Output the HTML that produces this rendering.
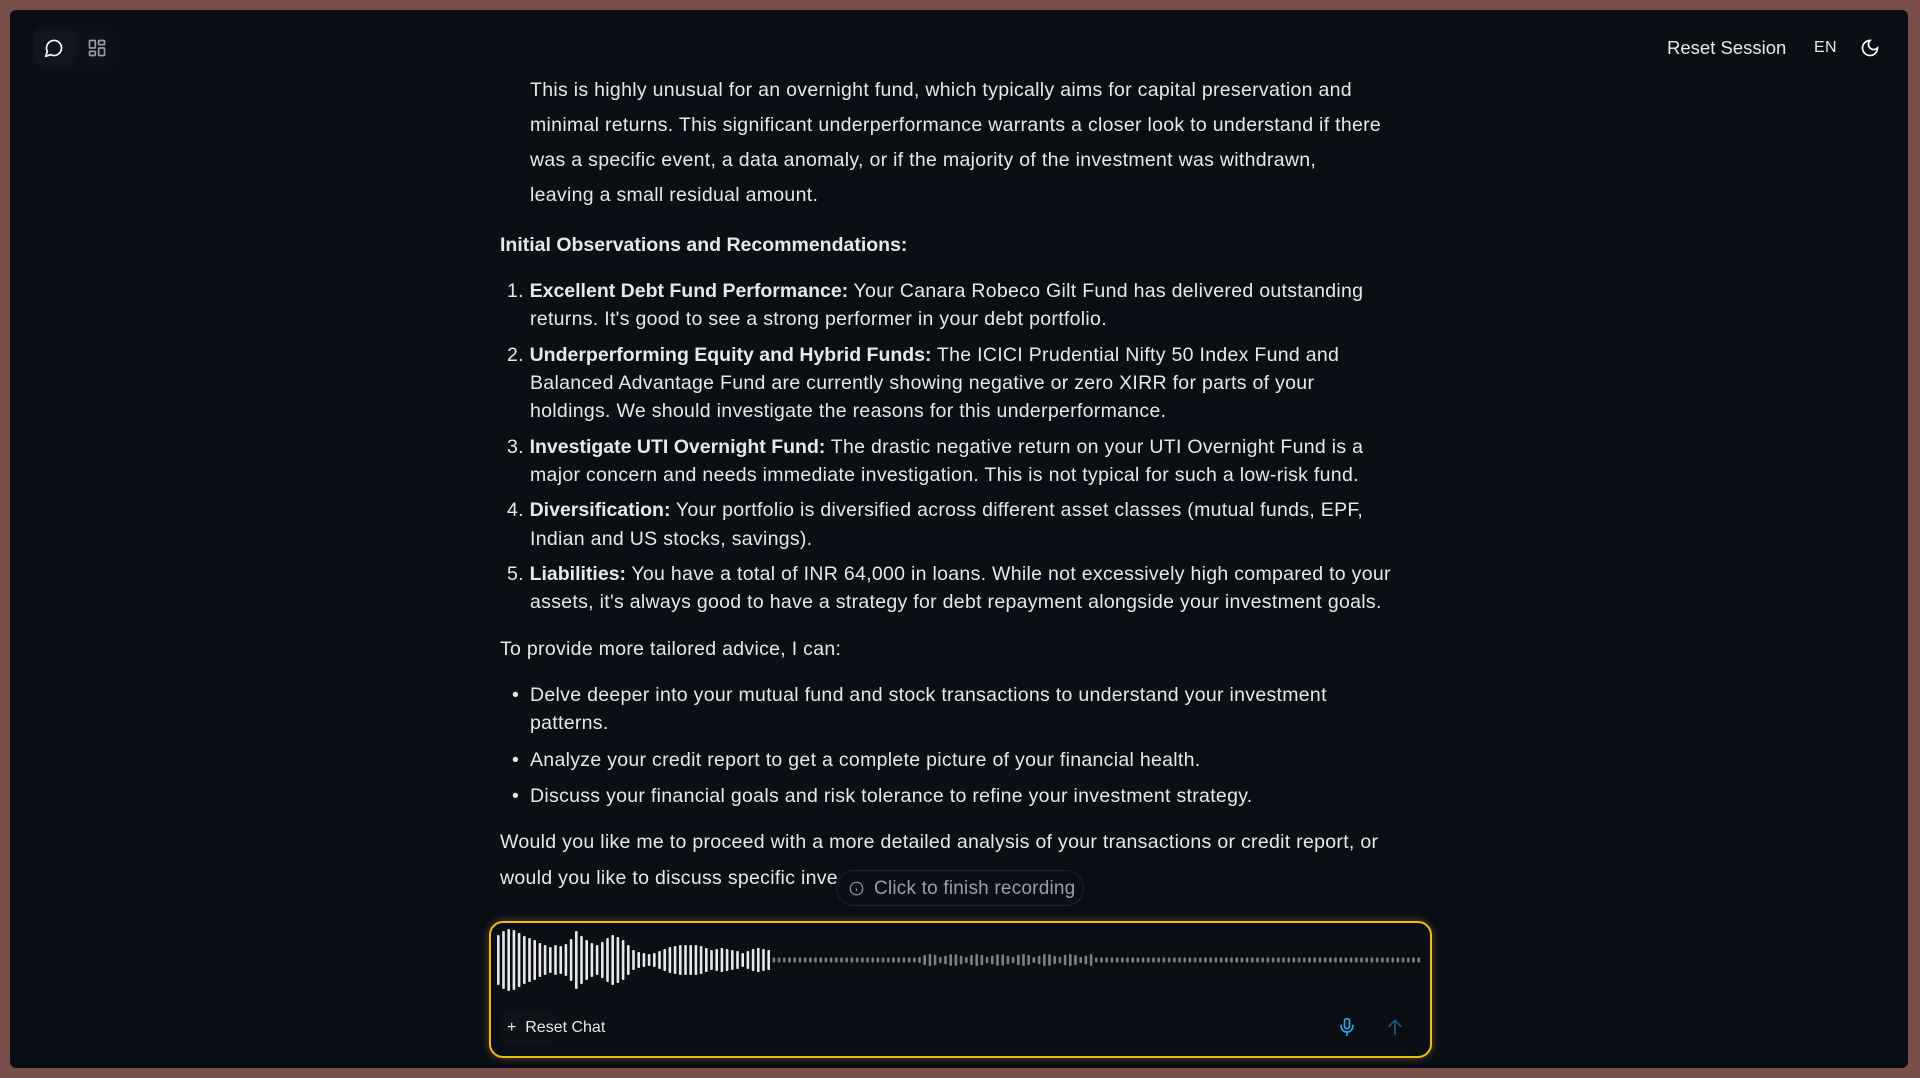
<!DOCTYPE html>
<html><head><meta charset="utf-8"><style>
*{margin:0;padding:0;box-sizing:border-box}
body{width:1920px;height:1078px;background:#7b4f49;overflow:hidden;font-family:"Liberation Sans",sans-serif;color:#e8e8ea;position:relative}
.frame{position:absolute;left:10px;top:10px;width:1898px;height:1058px;background:#0a0e15;border-radius:6px;overflow:hidden}
.abs{position:absolute}
.t{position:absolute;font-size:19.5px;white-space:nowrap;line-height:1;letter-spacing:0.3px}
b{font-weight:bold;letter-spacing:0}
</style></head><body>
<div class="frame"></div>
<div class="abs" style="left:32px;top:25px;width:88px;height:45px;background:#0c1118;border-radius:12px"></div>
<div class="abs" style="left:34px;top:29px;width:42px;height:37px;background:#10161d;border-radius:10px"></div>
<svg class="abs" style="left:44px;top:38px" width="20" height="20" viewBox="0 0 24 24" fill="none" stroke="#fff" stroke-width="2" stroke-linecap="round" stroke-linejoin="round"><path d="M7.9 20A9 9 0 1 0 4 16.1L2 22Z"/></svg>
<svg class="abs" style="left:87px;top:38px" width="20" height="20" viewBox="0 0 24 24" fill="none" stroke="#9aa0a8" stroke-width="2"><rect x="3" y="3" width="7" height="9" rx="1"/><rect x="14" y="3" width="7" height="5" rx="1"/><rect x="14" y="12" width="7" height="9" rx="1"/><rect x="3" y="16" width="7" height="5" rx="1"/></svg>
<div class="t" style="left:1667px;top:39px;font-size:18.5px;letter-spacing:0">Reset Session</div>
<div class="t" style="left:1814px;top:40px;font-size:16px">EN</div>
<svg class="abs" style="left:1860px;top:38px" width="20" height="20" viewBox="0 0 24 24" fill="none" stroke="#fff" stroke-width="2" stroke-linecap="round"><path d="M12 3a6 6 0 0 0 9 9 9 9 0 1 1-9-9Z"/></svg>

<div class="t" style="left:530px;top:81px">This is highly unusual for an overnight fund, which typically aims for capital preservation and</div>
<div class="t" style="left:530px;top:116px">minimal returns. This significant underperformance warrants a closer look to understand if there</div>
<div class="t" style="left:530px;top:151px">was a specific event, a data anomaly, or if the majority of the investment was withdrawn,</div>
<div class="t" style="left:530px;top:186px">leaving a small residual amount.</div>
<div class="t" style="left:500px;top:236px"><b>Initial Observations and Recommendations:</b></div>
<div class="t" style="left:507px;top:282px">1. <b>Excellent Debt Fund Performance:</b> Your Canara Robeco Gilt Fund has delivered outstanding</div>
<div class="t" style="left:530px;top:310px">returns. It's good to see a strong performer in your debt portfolio.</div>
<div class="t" style="left:507px;top:346px">2. <b>Underperforming Equity and Hybrid Funds:</b> The ICICI Prudential Nifty 50 Index Fund and</div>
<div class="t" style="left:530px;top:374px">Balanced Advantage Fund are currently showing negative or zero XIRR for parts of your</div>
<div class="t" style="left:530px;top:402px">holdings. We should investigate the reasons for this underperformance.</div>
<div class="t" style="left:507px;top:438px">3. <b>Investigate UTI Overnight Fund:</b> The drastic negative return on your UTI Overnight Fund is a</div>
<div class="t" style="left:530px;top:466px">major concern and needs immediate investigation. This is not typical for such a low-risk fund.</div>
<div class="t" style="left:507px;top:501px">4. <b>Diversification:</b> Your portfolio is diversified across different asset classes (mutual funds, EPF,</div>
<div class="t" style="left:530px;top:530px">Indian and US stocks, savings).</div>
<div class="t" style="left:507px;top:565px">5. <b>Liabilities:</b> You have a total of INR 64,000 in loans. While not excessively high compared to your</div>
<div class="t" style="left:530px;top:593px">assets, it's always good to have a strategy for debt repayment alongside your investment goals.</div>
<div class="t" style="left:500px;top:640px">To provide more tailored advice, I can:</div>
<div class="t" style="left:512px;top:686px">•</div><div class="t" style="left:530px;top:686px">Delve deeper into your mutual fund and stock transactions to understand your investment</div>
<div class="t" style="left:530px;top:714px">patterns.</div>
<div class="t" style="left:512px;top:751px">•</div><div class="t" style="left:530px;top:751px">Analyze your credit report to get a complete picture of your financial health.</div>
<div class="t" style="left:512px;top:787px">•</div><div class="t" style="left:530px;top:787px">Discuss your financial goals and risk tolerance to refine your investment strategy.</div>
<div class="t" style="left:500px;top:833px">Would you like me to proceed with a more detailed analysis of your transactions or credit report, or</div>
<div class="t" style="left:500px;top:869px">would you like to discuss specific inve</div>

<div class="abs" style="left:836px;top:870px;width:248px;height:36px;border:1px solid #1c232c;border-radius:18px;background:#0a0e15"></div>
<svg class="abs" style="left:849px;top:881px" width="15" height="15" viewBox="0 0 24 24" fill="none" stroke="#8a9098" stroke-width="2"><circle cx="12" cy="12" r="10"/><path d="M12 16v-4M12 8h.01"/></svg>
<div class="t" style="left:874px;top:879px;color:#9a9fa6;font-size:19px;letter-spacing:0.2px">Click to finish recording</div>

<div class="abs" style="left:489px;top:921px;width:943px;height:137px;border:2px solid #f2bb13;border-radius:14px;background:#0a0e15;box-shadow:0 0 8px rgba(242,187,19,.35)"></div>
<svg id="wv" class="abs" style="left:495px;top:925px" width="930" height="72"></svg>
<div class="abs" style="left:501px;top:1011px;width:58px;height:35px;background:#0d1219;border-radius:8px"></div>
<div class="t" style="left:507px;top:1020px;font-size:16px;letter-spacing:0">+&nbsp; Reset Chat</div>
<svg class="abs" style="left:1337px;top:1016px" width="20" height="22" viewBox="0 0 24 24" fill="none" stroke="#2ea8e6" stroke-width="2" stroke-linecap="round"><rect x="9" y="2" width="6" height="12" rx="3"/><path d="M19 10v1a7 7 0 0 1-14 0v-1M12 18v4"/></svg>
<svg class="abs" style="left:1385px;top:1016px" width="20" height="22" viewBox="0 0 24 24" fill="none" stroke="#1d5b7e" stroke-width="2" stroke-linecap="round" stroke-linejoin="round"><path d="M5 11l7-7 7 7M12 4v17"/></svg>
<script>
var s=document.getElementById('wv'),h='',n=0;
var big=[50,58,62,60,54,48,44,40,34,30,26,30,28,32,42,58,48,40,34,30,36,44,50,46,40,30,20,16,14,12,14,18,22,26,28,30,30,30,30,28,24,20,22,24,22,20,18,14,18,22,24,22,20];
for(var x=2;x<925;x+=5.2){var a,c;
if(n<big.length){a=big[n];c='#e8e8e8';}else{a=5+(n>80&&n<115?Math.abs(Math.sin(n*0.7))*7:0);c='#7d7f82';}
h+='<rect x="'+x.toFixed(1)+'" y="'+(35-a/2)+'" width="2.6" height="'+a+'" rx="1" fill="'+c+'"/>';n++;}
s.innerHTML=h;
</script>
</body></html>
